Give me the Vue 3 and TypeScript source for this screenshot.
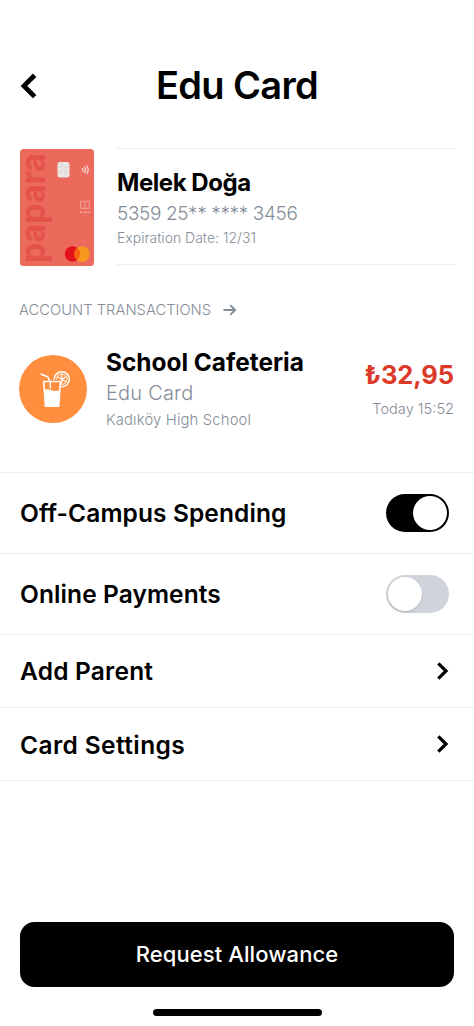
<script setup lang="ts">
import { ref } from 'vue'

interface Toggle {
  label: string
  on: boolean
  cls: string
}

const toggles = ref<Toggle[]>([
  { label: 'Off-Campus Spending', on: true, cls: 'off-campus' },
  { label: 'Online Payments', on: false, cls: 'online' },
])

const links = [
  { label: 'Add Parent', cls: 'parent' },
  { label: 'Card Settings', cls: 'settings' },
]
</script>

<template>
  <main class="screen">
    <header class="header">
      <svg class="back" width="18" height="26" viewBox="0 0 18 26">
        <path d="M14.6 2.2 4 12.9 14.6 23.6" fill="none" stroke="#000" stroke-width="4.8" />
      </svg>
      <h1 class="title"><span>Edu Card</span></h1>
    </header>

    <section class="card-row">
      <svg class="card" width="74" height="117" viewBox="0 0 74 117">
        <rect width="74" height="117" rx="3.5" fill="#ec6a5c" />
        <text class="brand" transform="translate(24.5 114) rotate(-90)" textLength="110" lengthAdjust="spacingAndGlyphs">papara</text>
        <rect x="37.5" y="13" width="12" height="15.5" rx="2.5" fill="#e9e6e4" />
        <path d="M38 18h4v5h-4M49 18h-4v5h4M42 18v-4M45 23v5" fill="none" stroke="#d4cfcc" stroke-width=".6" />
        <g fill="none" stroke="#fde3df" stroke-width="1.1" stroke-linecap="round">
          <path d="M62.4 19.3q1 1.500 0 3" />
          <path d="M64.500 18q1.900 2.800 0 5.600" />
          <path d="M66.700 16.800q2.900 4 0 8" />
        </g>
        <g fill="none" stroke="#f5a79c" stroke-width=".9">
          <path d="M60.700 52.300h3.300l1 .8 1-.8h3.300v7h-3.300l-1 .8-1-.8h-3.300zM65 53v7" />
          <path d="M60 63.300h2.300M63.600 63.300h2.300M67.200 63.300h2.300" stroke-width="1.600" />
        </g>
        <circle cx="52.500" cy="105" r="7.700" fill="#e3121b" />
        <circle cx="62" cy="105" r="7.700" fill="#f79a1c" />
        <path d="M57.250 98.950a7.700 7.700 0 0 1 0 12.100a7.700 7.700 0 0 1 0-12.100z" fill="#f7600f" />
      </svg>
      <div class="details">
        <div class="name"><span>Melek Doğa</span></div>
        <div class="number"><span>5359 25** **** 3456</span></div>
        <div class="expiry"><span>Expiration Date: 12/31</span></div>
      </div>
    </section>

    <div class="section">
      <span class="section-label">ACCOUNT TRANSACTIONS</span>
      <svg class="arrow" width="14" height="12" viewBox="0 0 14 12">
        <path d="M.5 6h11.500M7.300 1.200 12.100 6 7.300 10.800" fill="none" stroke="#858d98" stroke-width="1.900" />
      </svg>
    </div>

    <section class="transaction">
      <svg class="drink" width="68" height="68" viewBox="0 0 68 68">
        <circle cx="34" cy="34" r="34" fill="#ff8f3e" />
        <g fill="none" stroke="#fff" stroke-linecap="round" stroke-linejoin="round">
          <path d="M22.200 19.200 28.600 21.700 30.500 25.500" stroke-width="1.600" />
          <path d="M35.300 24.200a7.500 7.500 0 1 1 7.500 7.500" stroke-width="1.500" />
          <path d="M37.500 24.200a5.300 5.300 0 1 1 5.300 5.300" stroke-width=".9" />
          <path d="M42.800 24.200v-5M42.800 24.200l4.300-2.500M42.800 24.200l4.300 2.500M42.800 24.200l-4.300-2.500M42.800 24.200v4.500" stroke-width="1.100" />
        </g>
        <path d="M24.700 26.500h16.700l-1.700 24.800H26.500z" fill="#ff8f3e" stroke="#fff" stroke-width="1.600" stroke-linejoin="round" />
        <path d="M25.300 34.500q4-.6 7.200.7 4.300 1.700 8.300-.3L39.700 51.300H26.500z" fill="#fff" />
        <path d="M31.300 26.500v7" stroke="#fff" stroke-width="1.300" />
      </svg>
      <div class="merchant">
        <div class="shop"><span>School Cafeteria</span></div>
        <div class="source"><span>Edu Card</span></div>
        <div class="place"><span>Kadıköy High School</span></div>
      </div>
      <div class="payment">
        <div class="amount"><span>₺32,95</span></div>
        <div class="time"><span>Today 15:52</span></div>
      </div>
    </section>

    <section class="options">
      <div v-for="t in toggles" :key="t.label" class="row toggle-row">
        <span class="label" :class="t.cls">{{ t.label }}</span>
        <button class="switch" :class="{ on: t.on }" :aria-label="t.label" @click="t.on = !t.on">
          <i class="knob"></i>
        </button>
      </div>
      <div v-for="l in links" :key="l.label" class="row link-row">
        <span class="label" :class="l.cls">{{ l.label }}</span>
        <svg class="chevron" width="12" height="18" viewBox="0 0 12 18">
          <path d="M1.300 1.300 9 9 1.300 16.700" fill="none" stroke="#000" stroke-width="3.200" />
        </svg>
      </div>
    </section>

    <footer class="footer">
      <button class="cta"><span>Request Allowance</span></button>
      <div class="home"></div>
    </footer>
  </main>
</template>

<style>
body {
  margin: 0;
  background: #fff;
}
</style>

<style scoped>
.screen {
  box-sizing: border-box;
  width: 474px;
  height: 1026px;
  padding-top: 62px;
  display: flex;
  flex-direction: column;
  overflow: hidden;
  background: #fff;
  color: #000;
  font-family: Inter, "Liberation Sans", sans-serif;
  white-space: nowrap;
}

.header {
  display: grid;
  grid-template-columns: 74px 1fr 74px;
  align-items: center;
  height: 47px;
}

.back {
  margin-left: 20px;
}

.title {
  margin: 0;
  text-align: center;
  font-size: 38px;
  line-height: 47px;
  font-weight: 620;
  letter-spacing: -0.65px;
}

.card-row {
  display: flex;
  gap: 23px;
  margin: 40px 19px 0 20px;
  height: 117px;
}

.card {
  flex: none;
  overflow: visible;
}

.brand {
  font-family: Inter, sans-serif;
  font-size: 35px;
  font-weight: 700;
  fill: #e4524a;
}

.details {
  flex: 1;
  box-sizing: border-box;
  height: 117px;
  margin-top: -1px;
  padding-top: 17px;
  border-top: 1px solid #ededee;
  border-bottom: 1px solid #ededee;
}

.name {
  font-size: 24px;
  line-height: 34px;
  font-weight: 650;
  letter-spacing: -0.45px;
}

.number {
  font-size: 19px;
  line-height: 27px;
  font-weight: 300;
  letter-spacing: -0.38px;
  color: #858d98;
}

.expiry {
  font-size: 14px;
  line-height: 22px;
  font-weight: 300;
  color: #858d98;
}

.section {
  display: flex;
  align-items: center;
  gap: 12px;
  height: 20px;
  margin: 34px 0 0 19px;
  color: #858d98;
}

.section-label {
  font-size: 14.75px;
  font-weight: 300;
}

.transaction {
  display: flex;
  height: 82px;
  margin: 29px 20px 0 19px;
}

.drink {
  flex: none;
  margin-top: 6px;
}

.merchant {
  flex: 1;
  margin-left: 19px;
}

.shop {
  font-size: 24.4px;
  line-height: 27px;
  font-weight: 650;
}

.source {
  padding-top: 1px;
  font-size: 20px;
  line-height: 33px;
  font-weight: 300;
  letter-spacing: 0.2px;
  color: #858d98;
}

.place {
  font-size: 14.8px;
  line-height: 20px;
  font-weight: 300;
  letter-spacing: 0.17px;
  color: #858d98;
}

.payment {
  padding-top: 8px;
  text-align: right;
}

.amount {
  font-size: 25.5px;
  line-height: 36px;
  font-weight: 700;
  letter-spacing: -0.1px;
  color: #dc3a28;
}

.time {
  font-size: 14.6px;
  line-height: 32px;
  font-weight: 300;
  color: #858d98;
}

.options {
  margin-top: 41px;
  border-top: 1px solid #ededee;
}

.row {
  display: flex;
  align-items: center;
  justify-content: space-between;
  box-sizing: border-box;
  padding: 0 25px 0 20px;
  border-bottom: 1px solid #ededee;
}

.toggle-row {
  height: 81px;
}

.link-row {
  height: 73px;
}

.label {
  font-size: 24.5px;
  line-height: 32px;
  font-weight: 570;
  letter-spacing: 0.1px;
}

.parent {
  letter-spacing: 0.2px;
}

.settings {
  padding-top: 1px;
  letter-spacing: 0.4px;
}

.switch {
  display: flex;
  align-items: center;
  box-sizing: border-box;
  width: 63px;
  height: 38px;
  padding: 0 2px;
  border: 0;
  border-radius: 19px;
  background: #cfd5db;
}

.knob {
  width: 34px;
  height: 34px;
  border-radius: 50%;
  background: #fff;
  box-shadow: 0 1px 2px rgba(0, 0, 0, 0.16);
}

.switch.on {
  justify-content: flex-end;
  background: #000;
}

.footer {
  display: flex;
  flex-direction: column;
  align-items: center;
  margin-top: auto;
  padding-bottom: 10px;
}

.cta {
  width: 434px;
  height: 65px;
  padding: 0;
  border: 0;
  border-radius: 14.5px;
  background: #000;
  color: #fff;
  font-family: inherit;
  font-size: 22px;
  line-height: 65px;
  font-weight: 500;
  letter-spacing: 0.1px;
}

.home {
  width: 169px;
  height: 7px;
  margin-top: 22px;
  border-radius: 4px;
  background: #000;
}
</style>
